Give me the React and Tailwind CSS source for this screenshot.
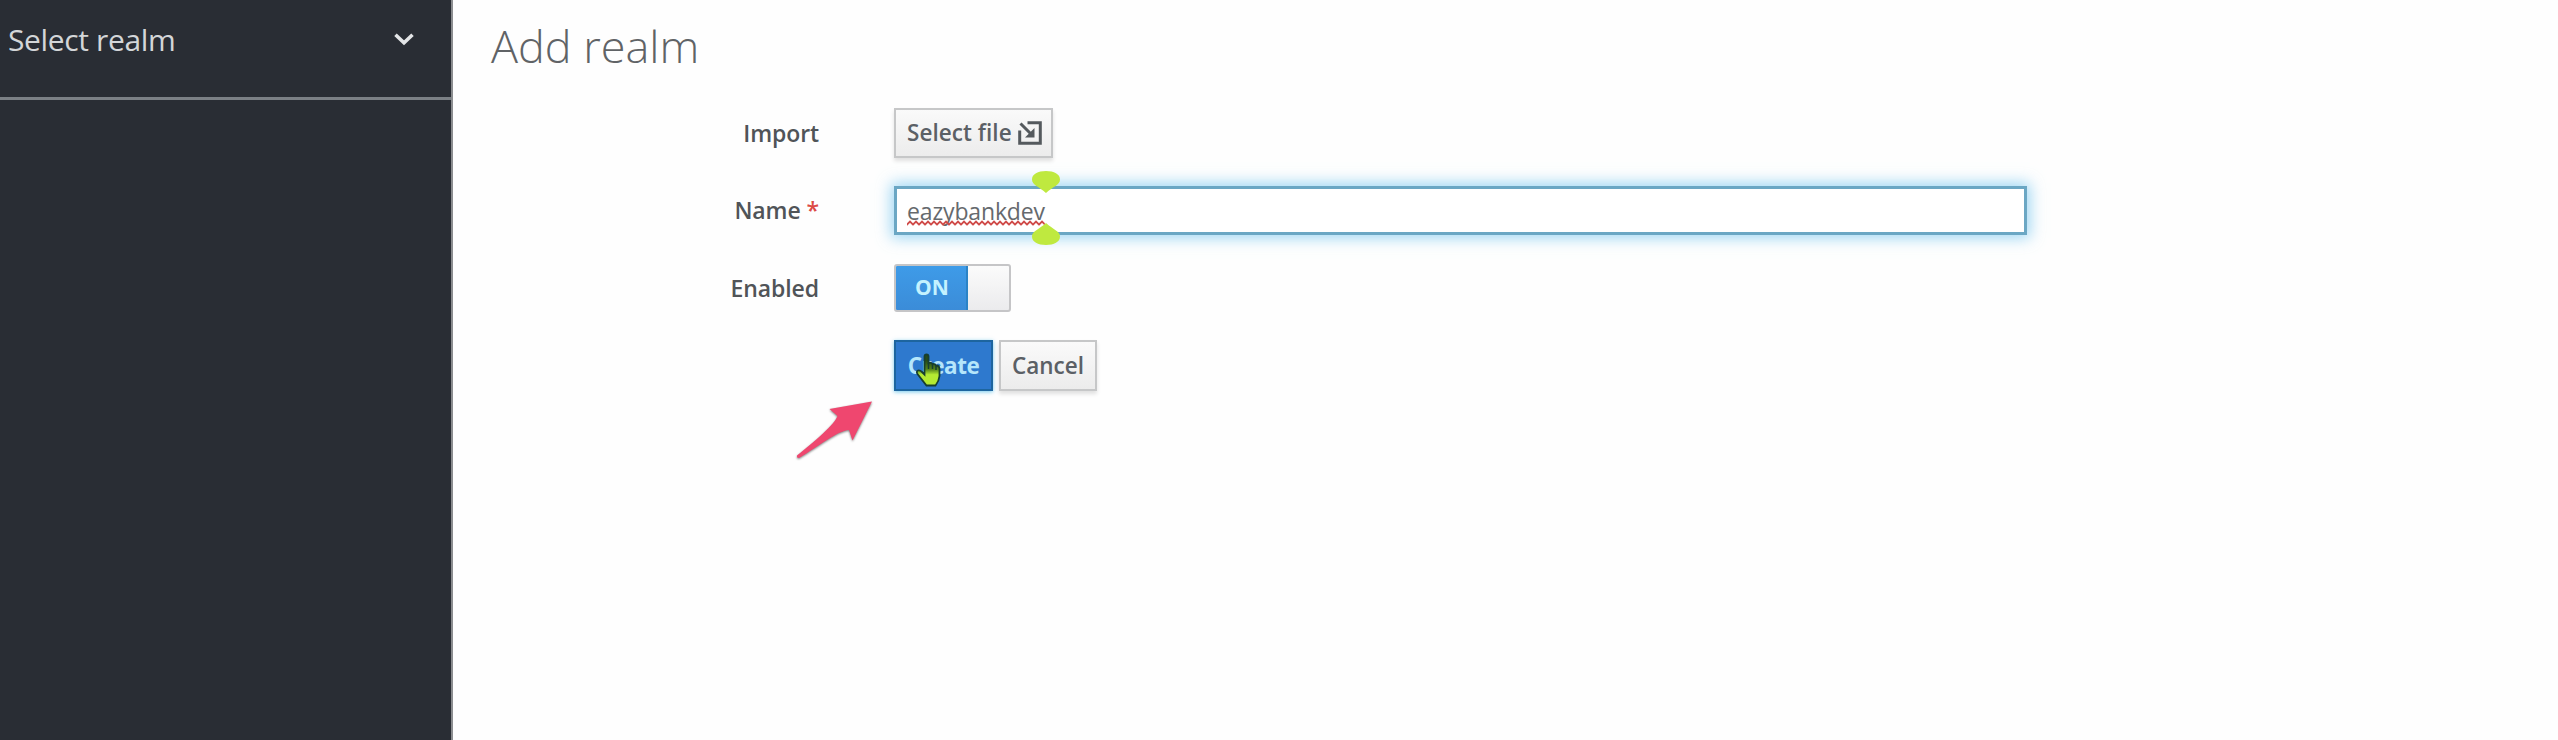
function Label({ children }) {
  return (
    <div className="w-[366px] shrink-0 text-right text-[23px] leading-[30px] font-semibold tracking-[-0.1px] text-[#505458]">
      {children}
    </div>
  );
}

function ImportIcon() {
  return (
    <svg viewBox="0 0 24 24" className="ml-[6px] h-6 w-6 shrink-0" fill="none" stroke="#54595d" strokeWidth="3">
      <path d="M9.5 1.7H22.3V22.3H1.7V9.5" />
      <path d="M2.5 2.5L12.5 12.5" />
      <path d="M16.5 7V16.5H7Z" fill="#54595d" stroke="none" />
    </svg>
  );
}

function CaretHandle({ className }) {
  return (
    <svg viewBox="0 0 30 24" className={className}>
      <path d="M1 9.500C1 4 7 1 15 1S29 4 29 9.500C29 15 22 16.500 15 23C8 16.500 1 15 1 9.500Z" fill="#bfe93f" />
    </svg>
  );
}

function SpellingMark() {
  return (
    <svg className="absolute bottom-0 left-0 h-[6px] w-full">
      <defs>
        <pattern id="squiggle" width="6" height="6" patternUnits="userSpaceOnUse">
          <path d="M-1 5.500L0 4.500L3 1.500L6 4.500L7 5.500" fill="none" stroke="#cf4a48" strokeWidth="1.800" />
        </pattern>
      </defs>
      <rect width="100%" height="6" fill="url(#squiggle)" />
    </svg>
  );
}

function Pointer() {
  return (
    <svg viewBox="0 0 26 34" className="absolute top-[11px] left-[19px] h-[34px] w-[26px]">
      <defs>
        <linearGradient id="hand" x1="0" y1="0" x2="0" y2="1">
          <stop offset="0.2" stopColor="#264c18" />
          <stop offset="0.48" stopColor="#55841c" />
          <stop offset="0.65" stopColor="#b4ea32" />
        </linearGradient>
      </defs>
      <path
        d="M9.500 3.500Q9.500 1.500 11.500 1.500T13.500 3.500V10Q16 9 17.500 11Q20 10.500 21 12.500Q24.500 12.500 24.500 16V23Q24 28 20.500 32.500H11.500L2.500 21Q1 18.500 3 17.500Q5 17 7 19L9.500 21.500Z"
        fill="url(#hand)"
        stroke="#173e30"
        strokeWidth="1.800"
      />
      <path d="M13.500 10V16M17.500 11V16M21 12.500V17" stroke="#173e30" strokeWidth="1.500" />
    </svg>
  );
}

export default function App() {
  return (
    <div className="flex h-[740px] w-[2558px] overflow-hidden bg-[#fefefe] font-['Open_Sans',sans-serif]">
      <aside className="w-[453px] shrink-0 border-r-2 border-[#8b8d90] bg-[#292d34]">
        <div className="flex h-[100px] items-start justify-between border-b-3 border-[#7b8085] pt-[20px] pr-[37px] pl-[8px]">
          <span className="text-[30px] leading-[40px] font-normal tracking-[-0.35px] text-[#d3d6d8]">Select realm</span>
          <svg viewBox="0 0 20 13" className="mt-[13px] h-[13px] w-5" fill="none" stroke="#e3e5e7" strokeWidth="3.600">
            <path d="M1.500 1.800L10 9.800L18.500 1.800" />
          </svg>
        </div>
      </aside>

      <main className="min-w-0 flex-1">
        <h1 className="pt-[15px] pl-[38px] text-[45px] leading-[61px] font-light text-[#606366]">Add realm</h1>

        <form className="mt-[32px] flex flex-col">
          <div className="flex h-[49px] items-center">
            <Label>Import</Label>
            <button
              type="button"
              className="ml-[75px] flex h-[50px] w-[159px] items-center border-2 border-[#c6c7c8] bg-linear-to-b from-[#fafafa] to-[#ececec] pl-[11px] text-[22.500px] font-semibold tracking-[0.05px] text-[#5b6065] shadow-[0_3px_4px_rgba(0,0,0,0.12)]"
            >
              <span className="pt-px whitespace-nowrap">Select file</span>
              <ImportIcon />
            </button>
          </div>

          <div className="mt-[29px] flex h-[49px] items-center">
            <div className="pb-[2px]">
              <Label>
                Name <span className="text-[#dc4a45]">*</span>
              </Label>
            </div>
            <div className="relative ml-[75px] flex h-[49px] w-[1133px] items-center border-3 border-[#6ba7c4] bg-white pl-[10px] shadow-[0_0_14px_3px_rgba(118,198,240,0.7)]">
              <span className="relative text-[23px] leading-[30px] tracking-[-0.15px] text-[#65696d]">
                eazybankdev
                <SpellingMark />
              </span>
              <CaretHandle className="absolute top-[-19px] left-[133px] h-[24px] w-[32px]" />
              <CaretHandle className="absolute top-[33px] left-[133px] h-[24px] w-[32px] rotate-180" />
            </div>
          </div>

          <div className="mt-[28px] flex h-[49px] items-center">
            <Label>Enabled</Label>
            <div className="ml-[75px] flex h-[48px] w-[117px] overflow-hidden rounded-[3px] border-2 border-[#c5c5c7] bg-linear-to-b from-[#fbfbfb] to-[#ebebed]">
              <div className="-m-[2px] flex w-[74px] items-center justify-center border-2 border-[#2b83c6] bg-linear-to-b from-[#3e9be8] to-[#3b8cd8] pl-[2px] text-[21px] font-bold text-[#c4f2ff]">
                ON
              </div>
            </div>
          </div>

          <div className="mt-[28px] ml-[441px] flex h-[51px] gap-[6px] text-[22.500px]">
            <button
              type="button"
              className="relative w-[99px] border-2 border-[#1d659f] bg-[#2e79ce] font-bold tracking-[-0.5px] text-[#b5e6fb] shadow-[0_1px_4px_rgba(60,180,230,0.7)]"
            >
              Create
              <Pointer />
            </button>
            <button
              type="button"
              className="w-[98px] border-2 border-[#c6c7c8] bg-linear-to-b from-[#fafafa] to-[#ececec] font-semibold text-[#5b6065] shadow-[0_3px_4px_rgba(0,0,0,0.12)]"
            >
              Cancel
            </button>
          </div>
        </form>

        <svg viewBox="0 0 80 64" className="mt-[9px] ml-[342px] h-[64px] w-[80px] drop-shadow-[0_1px_1px_rgba(40,40,40,0.6)]">
          <path
            d="M77 1.500L34.500 9L42.500 16C40 24 19 42 2 55.500Q1.500 58 4 58C24 46 42 31 54 30L57.500 40.500Z"
            fill="#ef476f"
          />
        </svg>
      </main>
    </div>
  );
}
